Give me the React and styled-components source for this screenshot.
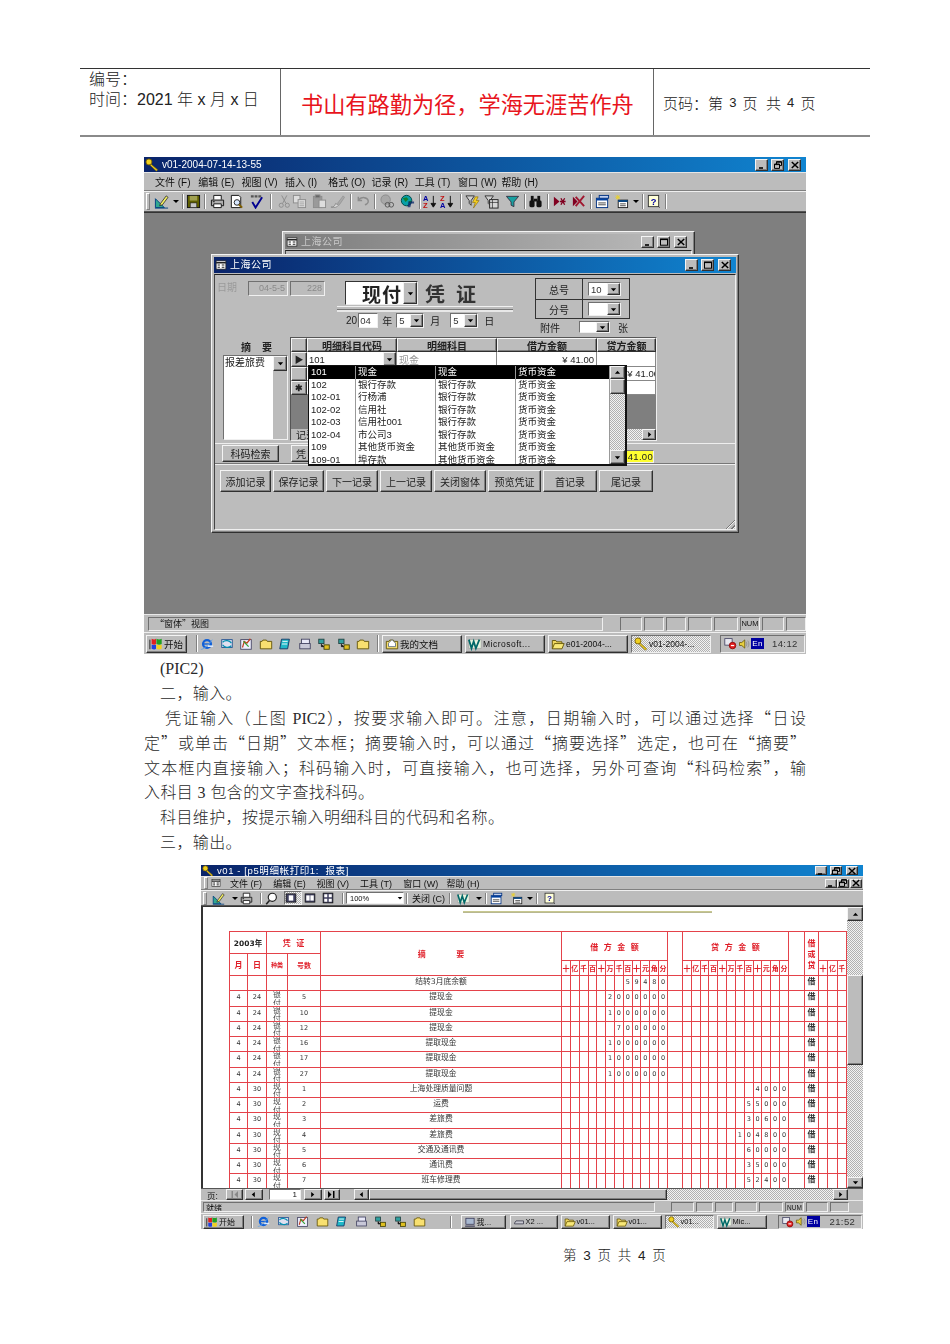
import React from 'react';
import styled, { createGlobalStyle, css } from 'styled-components';

const UI = `"Liberation Sans", "Noto Sans CJK SC", sans-serif`;
const SERIF = `"Liberation Serif", "Noto Sans CJK SC", serif`;
const FACE = '#bcbcbc';

const Global = createGlobalStyle`
  html, body { margin: 0; padding: 0; background: #fff; }
  body { font-family: ${SERIF}; color: #111; }
`;

const raised = css`
  background: ${FACE};
  border: 1px solid;
  border-color: #f4f4f4 #303030 #303030 #f4f4f4;
  box-shadow: inset -1px -1px 0 #808080;
  box-sizing: border-box;
`;
const sunken = css`
  border: 1px solid;
  border-color: #707070 #f0f0f0 #f0f0f0 #707070;
  box-sizing: border-box;
`;
const dither = css`
  background: repeating-conic-gradient(#f2f2f2 0 25%, #b0b0b0 0 50%) 0 0 / 2px 2px;
`;

/* ---------- document ---------- */
const Page = styled.div`
  width: 950px;
  height: 1344px;
  overflow: hidden;
  padding-top: 68px;
  box-sizing: border-box;
`;
const Header = styled.div`
  margin-left: 80px;
  width: 790px;
  height: 69px;
  box-sizing: border-box;
  border-top: 1px solid #333;
  border-bottom: 2px solid #8a8a8a;
  display: grid;
  grid-template-columns: 201px 373px 216px;
  font-family: ${UI};
  font-weight: 300;
`;
const HeadLeft = styled.div`
  padding: 1px 0 0 9px;
  font-size: 16px;
  line-height: 20px;
  color: #222;
  border-right: 1px solid #666;
`;
const HeadMid = styled.div`
  display: flex;
  align-items: center;
  padding: 2px 0 0 20px;
  font-size: 22.2px;
  font-weight: 400;
  color: #e8141c;
  border-right: 1px solid #666;
  white-space: nowrap;
`;
const HeadRight = styled.div`
  display: flex;
  align-items: center;
  padding: 1px 0 0 9px;
  font-size: 15px;
  color: #222;
  white-space: pre;
`;
const Narrow = styled.span`
  font-size: 13px;
  margin: 0 2px;
`;
const Shot = styled.div`
  margin-left: ${p => p.$x}px;
  margin-top: ${p => p.$top}px;
  width: 662px;
  height: ${p => p.$h}px;
  display: flex;
  flex-direction: column;
  background: ${FACE};
  font-family: ${UI};
  overflow: hidden;
  filter: blur(${p => p.$blur}px);
`;
const Body = styled.div`
  margin: 3px 0 0 144px;
  width: 662px;
  font-family: ${SERIF};
  font-size: 16px;
  font-weight: 300;
  line-height: 24.9px;
  color: #2a2a2a;
`;
const Line = styled.div`
  height: 24.9px;
  padding-left: ${p => p.$i || 0}px;
  letter-spacing: ${p => p.$s || 0}px;
  white-space: nowrap;
`;
const JLine = styled.div`
  height: 24.9px;
  padding-left: ${p => p.$i || 0}px;
  text-align: justify;
  text-align-last: justify;
`;
const Quote = styled.span`
  font-family: "Noto Sans CJK SC", sans-serif;
  line-height: 1;
`;
const PageNo = styled.div`
  margin: 19px 0 0 563px;
  font-family: ${UI};
  font-size: 13.5px;
  font-weight: 300;
  line-height: 16px;
  letter-spacing: 1.5px;
  color: #222;
  white-space: pre;
`;

/* ---------- window chrome ---------- */
const TitleBar = styled.div`
  flex: none;
  height: ${p => p.$h}px;
  line-height: ${p => p.$h}px;
  display: flex;
  align-items: center;
  gap: 3px;
  padding: 0 1px 0 1px;
  background: linear-gradient(90deg, ${p => (p.$off ? '#7c7c7c, #bdbdbd' : '#0a246a, #1084d0')});
  color: ${p => (p.$off ? '#c8c8c8' : '#fff')};
  font-size: ${p => p.$fs}px;
  letter-spacing: ${p => p.$ls || 0}px;
  white-space: pre;
  overflow: hidden;
`;
const Grow = styled.div`
  flex: 1;
  min-width: 0;
`;
const CtlBtn = styled.div`
  ${raised}
  flex: none;
  width: ${p => p.$w}px;
  height: ${p => p.$h}px;
  display: flex;
  align-items: center;
  justify-content: center;
  margin-left: ${p => p.$gap || 0}px;
`;
const MenuRow = styled.div`
  flex: none;
  height: ${p => p.$h}px;
  display: flex;
  align-items: center;
  padding-left: ${p => p.$pad}px;
  font-size: ${p => p.$fs}px;
  color: #111;
  white-space: nowrap;
  border-top: 1px solid #e6e6e6;
  border-bottom: 1px solid #808080;
  box-sizing: border-box;
`;
const MenuItem = styled.span`
  flex: none;
  width: 43.3px;
`;
const ToolRow = styled.div`
  flex: none;
  height: ${p => p.$h}px;
  display: flex;
  align-items: center;
  padding-left: 2px;
  box-sizing: border-box;
  border-top: 1px solid #efefef;
  border-bottom: 1px solid #555;
`;
const Grip = styled.div`
  flex: none;
  width: 2px;
  height: 80%;
  border: 1px solid;
  border-color: #fff #808080 #808080 #fff;
  margin-right: 3px;
`;
const Tool = styled.div`
  flex: none;
  width: ${p => p.$w}px;
  display: flex;
  align-items: center;
  justify-content: flex-start;
`;
const Sep = styled.div`
  flex: none;
  width: 0;
  height: 80%;
  border-left: 1px solid #808080;
  border-right: 1px solid #fff;
  margin: 0 ${p => p.$m ?? 2}px;
`;
const Pressed = styled(Tool)`
  ${sunken}
  ${dither}
  height: 14px;
`;
const DownSlot = styled(Tool)`
  justify-content: center;
`;
const DownMark = styled.span`
  width: 0;
  height: 0;
  border-left: 3px solid transparent;
  border-right: 3px solid transparent;
  border-top: 3px solid #000;
`;

/* ---------- status + taskbar ---------- */
const StatusRow = styled.div`
  flex: none;
  height: ${p => p.$h}px;
  display: flex;
  align-items: center;
  gap: ${p => p.$gap || 2}px;
  padding: 0 3px 0 ${p => p.$pad || 4}px;
  box-sizing: border-box;
  border-top: 1px solid #e8e8e8;
`;
const StatusCell = styled.div`
  ${sunken}
  flex: ${p => (p.$w ? 'none' : 1)};
  width: ${p => p.$w || 0}px;
  height: ${p => p.$ch}px;
  padding-left: ${p => p.$pl || 0}px;
  display: flex;
  align-items: center;
  justify-content: ${p => (p.$center ? 'center' : 'flex-start')};
  font-size: ${p => p.$fs || 9}px;
  white-space: nowrap;
  overflow: hidden;
`;
const TaskRow = styled.div`
  flex: none;
  height: ${p => p.$h}px;
  display: flex;
  align-items: center;
  padding: 0 1px 0 2px;
  box-sizing: border-box;
  border-top: 1px solid #efefef;
`;
const TaskBtn = styled.div`
  ${p => (p.$on ? sunken : raised)}
  ${p => p.$on && dither}
  flex: none;
  width: ${p => p.$w}px;
  height: ${p => p.$ch}px;
  margin-right: ${p => p.$gap ?? 3}px;
  display: flex;
  align-items: center;
  gap: 1px;
  padding-left: 2px;
  font-size: ${p => p.$fs || 9.5}px;
  letter-spacing: ${p => p.$ls || 0}px;
  white-space: nowrap;
  overflow: hidden;
`;
const Tray = styled.div`
  ${sunken}
  flex: none;
  margin-left: ${p => p.$ml}px;
  width: ${p => p.$w}px;
  height: ${p => p.$ch}px;
  display: flex;
  align-items: center;
  gap: 1px;
  padding-left: 3px;
  font-size: 9.5px;
  color: #333;
  letter-spacing: .4px;
`;
const EnBox = styled.span`
  flex: none;
  background: #0000a0;
  color: #fff;
  font-size: 8px;
  line-height: 11px;
  width: 13px;
  text-align: center;
  margin-right: ${p => p.$mr}px;
`;

/* ---------- desktop + windows ---------- */
const Desktop = styled.div`
  flex: 1;
  position: relative;
  background: #7f7f7f;
  border-top: 1px solid #333;
`;
const Win = styled.div`
  ${raised}
  position: absolute;
  left: ${p => p.$x}px;
  top: ${p => p.$y}px;
  width: ${p => p.$w}px;
  height: ${p => p.$h}px;
  padding: 2px;
  display: flex;
  flex-direction: column;
`;
const WinLabel = styled.span`
  font-size: 10px;
  letter-spacing: .5px;
`;
const Client = styled.div`
  flex: 1;
  margin-top: 1px;
  position: relative;
  border-top: 1px solid #222;
  border-left: 1px solid #444;
  border-right: 1px solid #efefef;
  border-bottom: 1px solid #efefef;
  background: ${FACE};
  display: flex;
  flex-direction: column;
  font-size: 10px;
  color: #222;
`;
const TopSection = styled.div`
  flex: none;
  height: 62px;
  display: flex;
`;
const DateGroup = styled.div`
  flex: none;
  display: flex;
  align-items: flex-start;
  padding: 6px 0 0 2px;
  width: 112px;
  box-sizing: border-box;
  color: #9a9a9a;
`;
const DateLabel = styled.span`
  width: 32px;
  line-height: 13px;
`;
const GrayField = styled.div`
  ${sunken}
  width: ${p => p.$w}px;
  height: 15px;
  margin-right: 2px;
  text-align: right;
  padding-right: 2px;
  line-height: 13px;
  font-size: 9px;
  color: #8a8a8a;
`;
const VoucherGroup = styled.div`
  flex: none;
  margin-left: 10px;
  width: 176px;
  display: flex;
  flex-direction: column;
`;
const VoucherTop = styled.div`
  display: flex;
  align-items: center;
  height: 24px;
  margin-top: 6px;
  padding-left: 8px;
`;
const PayBox = styled.div`
  ${sunken}
  width: 73px;
  height: 24px;
  background: #fff;
  display: flex;
  align-items: center;
  justify-content: flex-end;
  border-color: #333 #eee #eee #333;
`;
const PayText = styled.span`
  font-size: 19px;
  font-weight: 700;
  letter-spacing: 1px;
  color: #222;
  white-space: nowrap;
  margin-right: 1px;
`;
const VoucherText = styled.span`
  margin-left: 7px;
  font-size: 20px;
  font-weight: 700;
  white-space: pre;
  color: #333;
`;
const DoubleRule = styled.div`
  height: 2px;
  margin-top: 1px;
  border-top: 1px solid #f0f0f0;
  border-bottom: 1px solid #777;
  box-shadow: 0 2px 0 #e8e8e8;
`;
const DateRow = styled.div`
  display: flex;
  align-items: center;
  height: 15px;
  margin-top: 3px;
  padding-left: 9px;
  white-space: nowrap;
`;
const Word = styled.span`
  flex: none;
  margin-left: ${p => p.$ml || 0}px;
  margin-right: ${p => p.$mr || 0}px;
`;
const WhiteInput = styled.div`
  ${sunken}
  flex: none;
  width: ${p => p.$w}px;
  height: 15px;
  background: #fff;
  line-height: 13px;
  padding-left: 1px;
  font-size: 9.5px;
  color: #333;
`;
const SelectBox = styled.div`
  ${sunken}
  flex: none;
  width: ${p => p.$w}px;
  height: ${p => p.$h}px;
  margin: ${p => p.$m || '0'};
  background: #fff;
  display: flex;
  align-items: center;
  padding-left: 2px;
  font-size: 9.5px;
  color: #333;
  overflow: hidden;
`;
const SelectVal = styled.span`
  flex: 1;
`;
const Drop = styled.div`
  ${raised}
  flex: none;
  width: ${p => p.$w || 13}px;
  height: 100%;
  display: flex;
  align-items: center;
  justify-content: center;
`;
const NumBlock = styled.div`
  flex: none;
  margin-left: 22px;
  width: 95px;
`;
const NumTable = styled.div`
  margin-top: 3px;
  display: grid;
  grid-template-columns: 47px 47px;
  grid-template-rows: 21px 18px;
  border: 1px solid #333;
  box-sizing: border-box;
`;
const NumLabel = styled.div`
  display: flex;
  align-items: center;
  justify-content: center;
  border-right: 1px solid #333;
  border-bottom: ${p => (p.$last ? 0 : '1px solid #333')};
`;
const NumValue = styled.div`
  display: flex;
  align-items: center;
  padding-left: 5px;
  border-bottom: ${p => (p.$last ? 0 : '1px solid #333')};
`;
const AttachRow = styled.div`
  display: flex;
  align-items: center;
  height: 12px;
  margin-top: 2px;
  padding-left: 5px;
`;
const MidSection = styled.div`
  flex: none;
  height: 104px;
  display: flex;
  position: relative;
  z-index: 2;
`;
const SummaryCol = styled.div`
  flex: none;
  margin-left: 8px;
  width: 67px;
`;
const SummaryHead = styled.div`
  height: 18px;
  display: flex;
  align-items: center;
  justify-content: center;
  font-weight: 700;
  white-space: pre;
`;
const SummaryBox = styled.div`
  ${sunken}
  width: 65px;
  height: 85px;
  display: flex;
  background: ${FACE};
`;
const SummaryText = styled.div`
  flex: none;
  width: 49px;
  background: #fff;
  font-size: 10px;
  line-height: 13px;
  padding-left: 1px;
  box-sizing: border-box;
  white-space: nowrap;
`;
const SummaryDrop = styled.div`
  ${raised}
  flex: none;
  width: 14px;
  height: 15px;
  display: flex;
  align-items: center;
  justify-content: center;
`;
const Grid = styled.div`
  flex: none;
  width: 367px;
  height: 104px;
  position: relative;
  display: grid;
  grid-template-columns: 16px 90px 100px 100px 59px;
  grid-template-rows: 14px 15px 14px 14px 34px 11px;
  background: #fff;
  ${sunken}
  border-color: #555 #eee #eee #555;
`;
const HeadCell = styled.div`
  ${raised}
  display: flex;
  align-items: center;
  justify-content: center;
  font-size: 10px;
  font-weight: 700;
  white-space: nowrap;
  overflow: hidden;
`;
const RowMark = styled(HeadCell)`
  font-size: 9px;
`;
const DataCell = styled.div`
  display: flex;
  align-items: center;
  justify-content: ${p => (p.$right ? 'flex-end' : 'flex-start')};
  padding: 0 ${p => (p.$right ? 2 : 1)}px 0 ${p => (p.$right ? 0 : 2)}px;
  border-right: 1px solid #888;
  border-bottom: 1px solid #888;
  background: #fff;
  font-size: ${p => p.$fs || 9.5}px;
  color: ${p => p.$c || '#222'};
  white-space: nowrap;
  overflow: hidden;
`;
const Overrun = styled.span`
  flex: none;
  margin-right: -6px;
`;
const CellDrop = styled(Drop)`
  margin-left: auto;
  margin-right: -1px;
`;
const GridFill = styled.div`
  grid-column: 1 / -1;
  background: #7f7f7f;
`;
const RecordBar = styled.div`
  grid-column: 1 / -1;
  display: flex;
  align-items: center;
  background: ${FACE};
  padding-left: 5px;
  font-size: 10px;
`;
const BarArrow = styled.div`
  ${raised}
  flex: none;
  width: ${p => p.$w || 14}px;
  height: ${p => p.$h || 11}px;
  display: flex;
  align-items: center;
  justify-content: center;
`;
const DitherFill = styled.div`
  ${dither}
  flex: ${p => (p.$h ? 'none' : 1)};
  height: ${p => (p.$h ? `${p.$h}px` : 'auto')};
  align-self: stretch;
`;
const List = styled.div`
  position: absolute;
  left: 17px;
  top: 27px;
  width: 319px;
  height: 101px;
  z-index: 3;
  display: flex;
  background: #fff;
  border: 1px solid #111;
  border-width: 1px 2px 2px 1px;
  box-sizing: border-box;
`;
const ListRows = styled.div`
  flex: 1;
  min-width: 0;
  overflow: hidden;
`;
const ListRow = styled.div`
  display: grid;
  grid-template-columns: 47px 80px 80px 1fr;
  height: 12.5px;
  line-height: 12.5px;
  font-size: 9.5px;
  background: ${p => (p.$sel ? '#000' : '#fff')};
  color: ${p => (p.$sel ? '#fff' : '#222')};
`;
const ListCell = styled.div`
  padding-left: 2px;
  border-right: 1px solid #999;
  white-space: nowrap;
  overflow: hidden;
`;
const VScroll = styled.div`
  flex: none;
  width: ${p => p.$w}px;
  display: flex;
  flex-direction: column;
`;
const Thumb = styled.div`
  ${raised}
  flex: none;
  height: ${p => p.$h}px;
`;
const FootRow = styled.div`
  flex: none;
  height: 21px;
  display: flex;
  align-items: center;
  box-sizing: border-box;
  margin-top: 2px;
  border-top: 1px solid #eee;
  border-bottom: 1px solid #777;
  box-shadow: 0 1px 0 #eee;
`;
const SmallBtn = styled.div`
  ${raised}
  flex: none;
  width: ${p => p.$w}px;
  height: ${p => p.$h}px;
  margin: ${p => p.$m || '0'};
  display: flex;
  align-items: center;
  justify-content: ${p => p.$left ? 'flex-start' : 'center'};
  padding-left: ${p => p.$left ? 4 : 0}px;
  font-size: 10px;
  white-space: nowrap;
`;
const YellowField = styled.div`
  ${sunken}
  flex: none;
  margin-left: auto;
  margin-right: 81px;
  margin-top: 6px;
  width: 28px;
  height: 13px;
  background: #ffff30;
  font-size: 9.5px;
  line-height: 11px;
  text-align: right;
  letter-spacing: .3px;
  color: #222;
`;
const ButtonRow = styled.div`
  flex: none;
  display: flex;
  gap: 2px;
  padding: 6px 0 0 5px;
`;
const ResizeGrip = styled.div`
  position: absolute;
  right: 0;
  bottom: 0;
  width: 12px;
  height: 12px;
  background: repeating-linear-gradient(135deg, transparent 0 2px, #777 2px 3px, #eee 3px 4px);
  clip-path: polygon(100% 0, 100% 100%, 0 100%);
`;

/* ---------- second shot ---------- */
const Content = styled.div`
  flex: 1;
  min-height: 0;
  display: flex;
  background: #fff;
  border-left: 2px solid #333;
  border-top: 1px solid #333;
`;
const Sheet = styled.div`
  flex: 1;
  min-width: 0;
  overflow: hidden;
  padding: 0 0 0 26px;
`;
const Ribbon = styled.div`
  margin: 4px 0 18px 234px;
  width: 249px;
  height: 2px;
  border-top: 1px solid #c8c890;
  border-bottom: 1px solid #b8b890;
  box-sizing: border-box;
`;
const Ledger = styled.table`
  border-collapse: collapse;
  table-layout: fixed;
  width: 617px;
  font-family: "DejaVu Sans", "Noto Sans CJK SC", sans-serif;
  color: #333;
  td { border: 1px solid #e4424a; padding: 0; text-align: center; font-size: 6.5px; overflow: hidden; white-space: nowrap; }
`;
const HeadTd = styled.td`
  && { color: #e01e28; font-size: ${p => p.$fs || 7.5}px; font-weight: 600; white-space: pre-wrap; }
`;
const Row = styled.tr`
  height: ${p => p.$h}px;
`;
const DocCell = styled.td`
  && { vertical-align: top; line-height: 12px; }
`;
const MemoCell = styled(DocCell)`
  && { font-size: 7.8px; line-height: 11px; }
`;
const Kind = styled.div`
  width: 9px;
  height: 14px;
  margin: 0 auto;
  overflow: hidden;
  white-space: normal;
  line-height: 8.5px;
  font-size: 7.8px;
  color: #444;
`;
const Side = styled.td`
  && { font-size: 8px; vertical-align: top; line-height: 12px; font-weight: 600; }
`;
const PagerRow = styled.div`
  flex: none;
  height: 12px;
  display: flex;
  align-items: center;
  padding-left: 6px;
  font-size: 8.5px;
  border-top: 1px solid #555;
  box-sizing: border-box;
`;
const PageBox = styled.div`
  ${sunken}
  flex: none;
  margin: 0 3px 0 6px;
  width: 32px;
  height: 11px;
  background: #fff;
  text-align: right;
  padding-right: 3px;
  font-size: 8px;
  line-height: 9px;
`;
const HThumb = styled.div`
  ${raised}
  flex: none;
  width: 298px;
  height: 11px;
`;
const Combo = styled.div`
  ${sunken}
  flex: none;
  width: 58px;
  height: 12px;
  background: #fff;
  display: flex;
  align-items: center;
  padding-left: 3px;
  font-size: 7.5px;
  font-family: ${UI};
`;
const ToolText = styled.span`
  flex: none;
  width: ${p => p.$w}px;
  text-align: center;
  font-size: 9px;
  white-space: nowrap;
`;
const TailGap = styled.div`
  flex: none;
  width: ${p => p.$w}px;
`;
const DarkInk = styled.span`
  color: #222;
`;

/* ---------- icons ---------- */
const G = '#8c8c8c';
const paths = {
  key: <g><circle cx="4.5" cy="4.5" r="3.4" fill="#f0d020" stroke="#7a6000"/><path d="M7 7l7.5 6.5-1.5 1.5L6 8.5z" fill="#e8c820" stroke="#7a6000" strokeWidth=".7"/></g>,
  design: <g><path d="M1.5 14.5V5l9.5 9.5z" fill="#30a890" stroke="#004080"/><path d="M1 15h14" stroke="#004080"/><path d="M7 10l6-8 2 1.5-6 8-3 1z" fill="#f4f060" stroke="#222" strokeWidth=".8"/></g>,
  save: <g><rect x="1.5" y="1.5" width="13" height="13" fill="#606000" stroke="#111"/><rect x="4" y="2" width="8" height="5" fill="#a0a050"/><rect x="4.5" y="9.5" width="7" height="5" fill="#c8c8c8" stroke="#111" strokeWidth=".6"/></g>,
  print: <g><path d="M4 6V1.5h8V6" fill="#fff" stroke="#111"/><path d="M1.5 6.5h13v6h-13z" fill="#b0b0b0" stroke="#111"/><path d="M4 10.5h8v4H4z" fill="#fff" stroke="#111"/><path d="M3 8.2h2" stroke="#111"/></g>,
  preview: <g><path d="M2.5 1.5h8l2 2v11h-10z" fill="#fff" stroke="#111"/><circle cx="8.5" cy="9" r="3" fill="#d8e8ff" stroke="#222"/><path d="M10.6 11.2l3.4 3.4" stroke="#806000" strokeWidth="2"/></g>,
  spell: <g><path d="M2 2.5h11" stroke="#555" strokeWidth="2.4" strokeDasharray="3 1"/><path d="M3.5 8.5l3.5 6 7-11" stroke="#000090" strokeWidth="2" fill="none"/></g>,
  cut: <g fill="none" stroke={G}><circle cx="4.5" cy="12" r="2.2"/><circle cx="11" cy="12" r="2.2"/><path d="M6 10L10.5 1.5M9.5 10L5 1.5"/></g>,
  copy: <g stroke={G}><rect x="1.5" y="1.5" width="7" height="8" fill="#ddd"/><rect x="6.5" y="6" width="8" height="8.5" fill="#ddd"/><path d="M8 8.5h5M8 10.5h5M8 12.5h5" strokeWidth=".7"/></g>,
  paste: <g stroke={G}><rect x="1.5" y="2.5" width="9" height="12" fill="#9a9a9a"/><rect x="3.5" y="1" width="5" height="3" fill="#666"/><rect x="7.5" y="6.5" width="7" height="8" fill="#ddd"/></g>,
  brush: <g><path d="M1 14c3 0 4-1 5-4l3 2c-1 2-4 3-8 2z" fill="#dcdcdc" stroke={G}/><path d="M8 10l6-8 1.5 1.5L10 11.5z" fill="#aaa" stroke={G} strokeWidth=".7"/></g>,
  undo: <g fill="none" stroke={G} strokeWidth="1.6"><path d="M3 6c3-3 9-3 10 1 .4 2-1.5 4-3.5 4.5"/><path d="M2.5 3v4h4"/></g>,
  link: <g><circle cx="6" cy="6" r="5" fill="#a8a8a8" stroke={G}/><circle cx="8" cy="11.5" r="2.5" fill="none" stroke="#555"/><circle cx="12" cy="11.5" r="2.5" fill="none" stroke="#555"/></g>,
  globe: <g><circle cx="7" cy="7" r="5.6" fill="#08a0a8" stroke="#044"/><path d="M3 4.5l4-1 2 2-3 3zM9 8l3-1-1 4z" fill="#148030"/><path d="M9 8h6v2H12l-1 4H8z" fill="#0a246a" opacity=".75"/></g>,
  az: <g fontFamily="Liberation Sans" fontWeight="700" fontSize="8"><text x="0" y="7" fill="#0000a0">A</text><text x="0" y="15" fill="#c01010">Z</text><path d="M11 2v10M8.5 10l2.5 4 2.5-4z" stroke="#111" fill="#111"/></g>,
  za: <g fontFamily="Liberation Sans" fontWeight="700" fontSize="8"><text x="0" y="7" fill="#c01010">Z</text><text x="0" y="15" fill="#0000a0">A</text><path d="M11 2v10M8.5 10l2.5 4 2.5-4z" stroke="#111" fill="#111"/></g>,
  filterSel: <g><path d="M1 2h9L6.5 7v5L4.5 10V7z" fill="#d0d0d0" stroke="#333"/><path d="M11 3l-3 6h3l-2 6 6-8h-3l2-4z" fill="#f4d020" stroke="#806000" strokeWidth=".6"/></g>,
  filterForm: <g><path d="M1 2h9L6.5 7v5L4.5 10V7z" fill="#d0d0d0" stroke="#333"/><rect x="6" y="6" width="9" height="9" fill="#d8d8d8" stroke="#222"/><path d="M6 9h9M9 6v9" stroke="#222" strokeWidth=".7"/></g>,
  filter: <path d="M1.5 2.5h13l-5 6v5l-3-1.5V8.5z" fill="#18a0a0" stroke="#334"/>,
  find: <g fill="#111"><rect x="1.5" y="7" width="5.5" height="7" rx="1.5"/><rect x="9" y="7" width="5.5" height="7" rx="1.5"/><rect x="3" y="2" width="3" height="6"/><rect x="10" y="2" width="3" height="6"/><rect x="6" y="5" width="4" height="3"/></g>,
  newRec: <g><path d="M2 3v10l6-5z" fill="#800020"/><path d="M9.5 4.5l4 7M13.5 4.5l-4 7M8.5 8h6" stroke="#800020" strokeWidth="1.4"/></g>,
  delRec: <g><path d="M2 3v10l5-5z" fill="#800020"/><path d="M5 3l9 10M14 2L5 13" stroke="#a01830" strokeWidth="2"/></g>,
  dbWin: <g><rect x="1.5" y="4.5" width="12" height="10" fill="#fff" stroke="#003080"/><rect x="1.5" y="4.5" width="12" height="2.4" fill="#0040a0"/><rect x="4.5" y="1.5" width="10" height="3" fill="#c0d0f0" stroke="#003080"/><path d="M3.5 9.5h8M3.5 11.5h8" stroke="#444"/></g>,
  newObj: <g><rect x="4.5" y="6.5" width="10" height="8" fill="#fff" stroke="#222"/><rect x="4.5" y="6.5" width="10" height="2" fill="#004080"/><path d="M6.5 10.5h6M6.5 12.5h6" stroke="#444"/><path d="M4 1v5M1.5 3.5h5M2 1.5l4 4M6 1.5l-4 4" stroke="#e8d030"/></g>,
  help: <g><rect x="2.5" y="1.5" width="11" height="12" fill="#ffffd8" stroke="#333"/><path d="M13.5 13.5l1 1" stroke="#333"/><text x="8" y="11.5" textAnchor="middle" fontFamily="Liberation Sans" fontWeight="700" fontSize="10" fill="#0000a0">?</text></g>,
  form: <g><rect x="1.5" y="2.5" width="13" height="11" fill="#fff" stroke="#222"/><path d="M1.5 5h13" stroke="#222" strokeWidth="2"/><path d="M3.5 8h3M3.5 11h3M9 8h3.5M9 11h3.5" stroke="#222" strokeWidth="1.6"/></g>,
  lens: <g><circle cx="9" cy="6.5" r="5" fill="#fff" stroke="#222" strokeWidth="1.4"/><path d="M5.5 10.5L1.5 15" stroke="#222" strokeWidth="2"/></g>,
  page1: <g><rect x="1.5" y="2.5" width="13" height="11" fill="#404060" stroke="#111"/><rect x="5" y="4.5" width="6" height="7" fill="#fff"/></g>,
  page2: <g><rect x="1.5" y="2.5" width="13" height="11" fill="#404060" stroke="#111"/><rect x="3" y="4.5" width="4.5" height="7" fill="#fff"/><rect x="8.5" y="4.5" width="4.5" height="7" fill="#fff"/></g>,
  page4: <g><rect x="1.5" y="1.5" width="13" height="13" fill="#404060" stroke="#111"/><path d="M3 3h4v4H3zM9 3h4v4H9zM3 9h4v4H3zM9 9h4v4H9z" fill="#fff"/></g>,
  word: <g><path d="M1 3h14v10H1z" fill="#e8f4e0" stroke="#888" strokeWidth=".5"/><path d="M1 3l3 10 2.5-8L9 13l4-10" stroke="#006868" strokeWidth="2" fill="none"/></g>,
  flag: <g><path d="M1 3v11" stroke="#111"/><path d="M3 2c2 1 4 1 5 0v6c-1 1-3 1-5 0z" fill="#e02020"/><path d="M8.5 2c2 1 4 1 6 0v6c-2 1-4 1-6 0z" fill="#20a020"/><path d="M3 8.5c2 1 4 1 5 0v5c-1 1-3 1-5 0z" fill="#2040e0"/><path d="M8.5 8.5c2 1 4 1 6 0v5c-2 1-4 1-6 0z" fill="#f0d020"/></g>,
  ie: <g><circle cx="8" cy="8" r="4.5" fill="none" stroke="#1060d8" strokeWidth="2.6"/><path d="M4 8h8" stroke="#1060d8" strokeWidth="1.6"/><path d="M9 10.5h6" stroke="#d8e8ff" strokeWidth="1.8"/><path d="M1 14c2 1 9-5 13-11" stroke="#60a0e8" fill="none"/></g>,
  ql1: <g><rect x="2" y="3" width="12" height="9" fill="#e0e0f0" stroke="#205090"/><path d="M3 6c3-3 8-2 10 1M13 10c-3 3-8 2-10-1" stroke="#0090b0" strokeWidth="1.4" fill="none"/></g>,
  ql2: <g><rect x="2" y="3" width="12" height="11" fill="#f0f0ff" stroke="#404060"/><path d="M4 12l2-7 3 2 4-5" stroke="#c04020" strokeWidth="1.4" fill="none"/><path d="M5 5l6 6" stroke="#30a030" strokeWidth="1.4"/></g>,
  folder: <g><path d="M1.5 13.5V5h2l1-1.5h4L9.5 5h5v8.5z" fill="#f8e070" stroke="#605000"/></g>,
  ql4: <g><path d="M4 2.5h9L11 13.5H2z" fill="#20b8c8" stroke="#103060"/><path d="M5 5h6M4.5 8h6" stroke="#fff"/></g>,
  ql5: <g><rect x="4" y="2.5" width="9" height="6" fill="#e8e8f8" stroke="#404060"/><rect x="2" y="7.5" width="12" height="6" fill="#c8c8d8" stroke="#404060"/></g>,
  ql6: <g><rect x="2" y="2.5" width="6" height="5" fill="#30a0a0" stroke="#204040"/><rect x="8" y="9" width="6" height="5" fill="#e0c020" stroke="#404000"/><path d="M5 8v3h3" stroke="#202020"/></g>,
  home: <g><path d="M1.5 13.5V5h3l1-1.5h4L10.5 5h4v8.5z" fill="#f8e070" stroke="#605000"/><path d="M4 7l4-4 4 4v4H4z" fill="#fff" stroke="#607080"/></g>,
  openf: <g><path d="M1.5 13.5V4h4l1 1.5h6v2" fill="#f0d860" stroke="#605000"/><path d="M1.5 13.5l2.5-6h11l-2.5 6z" fill="#f8e878" stroke="#605000"/></g>,
  pc: <g><rect x="2.5" y="3" width="11" height="8" fill="#a8b8d0" stroke="#303050"/><path d="M1.5 13.5h13" stroke="#303050" strokeWidth="1.4"/></g>,
  drive: <g><path d="M2 9.5l2-3h10v4H2z" fill="#c8c8d0" stroke="#303040"/></g>,
  tray: <g><rect x="1" y="2" width="9" height="8" fill="#e8e8f0" stroke="#404060"/><circle cx="10.5" cy="10.5" r="4" fill="#e02020" stroke="#800"/><path d="M8.5 10.5h4" stroke="#fff" strokeWidth="1.5"/></g>,
  speaker: <g><path d="M2 6h3l4-3.5v11L5 10H2z" fill="#e8d040" stroke="#605000"/><path d="M11 5c1 2 1 4 0 6M13 3.5c2 3 2 6 0 9" stroke="#888" fill="none"/></g>,
};
const Svg = styled.svg`
  flex: none;
  display: block;
`;
const Ic = ({ n, s = 15 }) => <Svg width={s} height={s} viewBox="0 0 16 16">{paths[n]}</Svg>;

const Min = () => <Svg width="8" height="8" viewBox="0 0 8 8"><path d="M1 7h4" stroke="#000" strokeWidth="1.6" /></Svg>;
const Max = () => <Svg width="8" height="8" viewBox="0 0 8 8"><rect x=".5" y="1" width="7" height="6.2" fill="none" stroke="#000" /><path d="M.5 1.5h7" stroke="#000" strokeWidth="1.2" /></Svg>;
const Rest = () => <Svg width="8" height="8" viewBox="0 0 8 8"><path d="M2.5 3V.6h5v4H5.5M.5 3h5v4.4h-5zM.5 3.6h5M2.5 1.2h5" fill="none" stroke="#000" /></Svg>;
const Cls = () => <Svg width="8" height="8" viewBox="0 0 8 8"><path d="M.8 1l6.4 6M7.2 1L.8 7" stroke="#000" strokeWidth="1.5" /></Svg>;
const Tri = ({ d = 'down', s = 7 }) => {
  const p = { down: 'M1 2.5h6L4 6z', up: 'M1 5.5h6L4 2z', left: 'M5.5 1v6L2 4z', right: 'M2.5 1v6L6 4z' }[d];
  return <Svg width={s} height={s} viewBox="0 0 8 8"><path d={p} fill="#000" /></Svg>;
};
const FirstLast = ({ end, c = '#000' }) => (
  <Svg width="9" height="7" viewBox="0 0 9 7">
    {end ? <path d="M1 0v7l3.5-3.5zM6 0h1.5v7H6z" fill={c} /> : <path d="M8 0v7L4.5 3.5zM1.5 0H3v7H1.5z" fill={c} />}
  </Svg>
);

const Controls = ({ w, h, gap, restore, tail = 1 }) => (
  <>
    <CtlBtn $w={w} $h={h}><Min /></CtlBtn>
    <CtlBtn $w={w} $h={h}>{restore ? <Rest /> : <Max />}</CtlBtn>
    <CtlBtn $w={w} $h={h} $gap={gap}><Cls /></CtlBtn>
    <TailGap $w={tail} />
  </>
);

const Tools = ({ items, s }) => items.map((t, i) => {
  if (t === '|') return <Sep key={i} />;
  if (typeof t === 'number') return <TailGap key={i} $w={t} />;
  if (t === 'v') return <DownSlot key={i} $w={8}><DownMark /></DownSlot>;
  if (t === 'V') return <DownSlot key={i} $w={10}><DownMark /></DownSlot>;
  return <Tool key={i} $w={t[1]}><Ic n={t[0]} s={s} /></Tool>;
});

/* Latin curly quotes would come out narrow: give them the CJK face */
const Q = ({ children }) => children.split(/([“”])/).map((p, i) => (
  p === '“' || p === '”' ? <Quote key={i}>{p}</Quote> : p
));

/* ---------- data ---------- */
const MENU1 = ['文件 (F)', '编辑 (E)', '视图 (V)', '插入 (I)', '格式 (O)', '记录 (R)', '工具 (T)', '窗口 (W)', '帮助 (H)'];
const MENU2 = ['文件 (F)', '编辑 (E)', '视图 (V)', '工具 (T)', '窗口 (W)', '帮助 (H)'];
const TOOLS1 = [
  1, ['design', 18], 'v', '|', ['save', 16], '|', 2, ['print', 19], ['preview', 20], ['spell', 19], '|', 3,
  ['cut', 15], ['copy', 20], ['paste', 18], ['brush', 18], '|', 2, ['undo', 16], '|', 2, ['link', 20], ['globe', 17], '|',
  ['az', 17], ['za', 18], '|', 1, ['filterSel', 19], ['filterForm', 21], ['filter', 17], '|', ['find', 17], '|', 1,
  ['newRec', 19], ['delRec', 17], '|', 1, ['dbWin', 19], ['newObj', 18], 'v', '|', ['help', 17], '|',
];
const PICK = [
  ['101', '现金', '现金', '货币资金'],
  ['102', '银行存款', '银行存款', '货币资金'],
  ['102-01', '行杨浦', '银行存款', '货币资金'],
  ['102-02', '信用社', '银行存款', '货币资金'],
  ['102-03', '信用社001', '银行存款', '货币资金'],
  ['102-04', '市公司3', '银行存款', '货币资金'],
  ['109', '其他货币资金', '其他货币资金', '货币资金'],
  ['109-01', '埠存款', '其他货币资金', '货币资金'],
];
const ACTIONS = [['添加记录', 51], ['保存记录', 51], ['下一记录', 52], ['上一记录', 52], ['关闭窗体', 52], ['预览凭证', 53], ['首记录', 54], ['尾记录', 54]];
const QUICK = ['ie', 'ql1', 'ql2', 'folder', 'ql4', 'ql5', 'ql6', 'ql6', 'folder'];
const UNITS = ['十', '亿', '千', '百', '十', '万', '千', '百', '十', '元', '角', '分'];
const LEDGER = [
  ['', '', '', '', '结转3月底余额', '59480', ''],
  ['4', '24', '银付', '5', '提现金', '2000000', ''],
  ['4', '24', '银付', '10', '提现金', '1000000', ''],
  ['4', '24', '银付', '12', '提现金', '700000', ''],
  ['4', '24', '银付', '16', '提取现金', '1000000', ''],
  ['4', '24', '银付', '17', '提取现金', '1000000', ''],
  ['4', '24', '银付', '27', '提取现金', '1000000', ''],
  ['4', '30', '现付', '1', '上海处理质量问题', '', '4000'],
  ['4', '30', '现付', '2', '运费', '', '55000'],
  ['4', '30', '现付', '3', '差旅费', '', '30600'],
  ['4', '30', '现付', '4', '差旅费', '', '104800'],
  ['4', '30', '现付', '5', '交通及通讯费', '', '60000'],
  ['4', '30', '现付', '6', '通讯费', '', '35000'],
  ['4', '30', '现付', '7', '班车修理费', '', '52400'],
];
const COLW = [18, 19, 21, 33, 241, ...Array(12).fill(8.83), 15, ...Array(12).fill(8.83), 16, 14, 9.3, 9.3, 9.4];
const digits = s => Array.from(s.padStart(12, ' '));

const Select = ({ w, h, m, v, dw }) => (
  <SelectBox $w={w} $h={h} $m={m}>
    <SelectVal>{v}</SelectVal>
    <Drop $w={dw}><Tri /></Drop>
  </SelectBox>
);

const VoucherWindow = () => (
  <Win $x={67} $y={41} $w={528} $h={279}>
    <TitleBar $h={16} $fs={10}>
      <Ic n="form" s={12} /><WinLabel>上海公司</WinLabel>
      <Grow />
      <Controls w={13} h={12} gap={1} />
    </TitleBar>
    <Client>
      <TopSection>
        <DateGroup>
          <DateLabel>日期</DateLabel>
          <GrayField $w={41}>04-5-5</GrayField>
          <GrayField $w={36}>228</GrayField>
        </DateGroup>
        <VoucherGroup>
          <VoucherTop>
            <PayBox>
              <PayText>现付</PayText>
              <Drop $w={14}><Tri /></Drop>
            </PayBox>
            <VoucherText>凭  证</VoucherText>
          </VoucherTop>
          <DoubleRule />
          <DateRow>
            <Word $mr={1}>20</Word>
            <WhiteInput $w={20}>04</WhiteInput>
            <Word $ml={4}>年</Word>
            <Select w={28} h={15} m="0 0 0 4px" v="5" />
            <Word $ml={6}>月</Word>
            <Select w={28} h={15} m="0 0 0 10px" v="5" />
            <Word $ml={6}>日</Word>
          </DateRow>
        </VoucherGroup>
        <NumBlock>
          <NumTable>
            <NumLabel>总号</NumLabel>
            <NumValue><Select w={33} h={14} v="10" /></NumValue>
            <NumLabel $last>分号</NumLabel>
            <NumValue $last><Select w={33} h={14} /></NumValue>
          </NumTable>
          <AttachRow>
            附件
            <Select w={31} h={12} m="0 8px 0 19px" />
            张
          </AttachRow>
        </NumBlock>
      </TopSection>
      <MidSection>
        <SummaryCol>
          <SummaryHead>摘    要</SummaryHead>
          <SummaryBox>
            <SummaryText>报差旅费</SummaryText>
            <SummaryDrop><Tri /></SummaryDrop>
          </SummaryBox>
        </SummaryCol>
        <Grid>
          <RowMark />
          <HeadCell>明细科目代码</HeadCell>
          <HeadCell>明细科目</HeadCell>
          <HeadCell>借方金额</HeadCell>
          <HeadCell>贷方金额</HeadCell>

          <RowMark>▶</RowMark>
          <DataCell>101<CellDrop $w={13}><Tri /></CellDrop></DataCell>
          <DataCell $c="#999" $fs={10}>现金</DataCell>
          <DataCell $right>¥ 41.00</DataCell>
          <DataCell />

          <RowMark />
          <DataCell /><DataCell /><DataCell />
          <DataCell $right><Overrun>¥ 41.00</Overrun></DataCell>

          <RowMark>✱</RowMark>
          <DataCell /><DataCell /><DataCell /><DataCell />

          <GridFill />
          <RecordBar>
            记录
            <Grow />
            <DitherFill />
            <BarArrow><Tri d="right" /></BarArrow>
          </RecordBar>
          <List>
            <ListRows>
              {PICK.map((r, i) => (
                <ListRow key={r[0]} $sel={i === 0}>
                  {r.map((c, j) => <ListCell key={j}>{c}</ListCell>)}
                </ListRow>
              ))}
            </ListRows>
            <VScroll $w={15}>
              <BarArrow $w={15} $h={13}><Tri d="up" /></BarArrow>
              <Thumb $h={15} />
              <DitherFill />
              <BarArrow $w={15} $h={14}><Tri /></BarArrow>
            </VScroll>
          </List>
        </Grid>
      </MidSection>
      <FootRow>
        <SmallBtn $w={57} $h={17} $m="0 0 0 7px">科码检索</SmallBtn>
        <SmallBtn $w={50} $h={17} $m="0 0 0 12px" $left>凭</SmallBtn>
        <YellowField>41.00</YellowField>
      </FootRow>
      <ButtonRow>
        {ACTIONS.map(([t, w]) => <SmallBtn key={t} $w={w} $h={22}>{t}</SmallBtn>)}
      </ButtonRow>
      <ResizeGrip />
    </Client>
  </Win>
);

const ShotOne = () => (
  <Shot $x={144} $top={20} $h={497} $blur={0.35}>
    <TitleBar $h={15} $fs={10}>
      <Ic n="key" s={14} />v01-2004-07-14-13-55
      <Grow />
      <Controls w={13} h={12} gap={1} restore />
    </TitleBar>
    <MenuRow $h={19} $pad={11} $fs={10}>
      {MENU1.map(m => <MenuItem key={m}>{m}</MenuItem>)}
    </MenuRow>
    <ToolRow $h={21}>
      <Grip />
      <Tools items={TOOLS1} />
    </ToolRow>
    <Desktop>
      <Win $x={138} $y={18} $w={413} $h={34}>
        <TitleBar $h={15} $fs={10} $off>
          <Ic n="form" s={12} /><WinLabel>上海公司</WinLabel>
          <Grow />
          <Controls w={13} h={12} gap={1} />
        </TitleBar>
        <Client />
      </Win>
      <VoucherWindow />
    </Desktop>
    <StatusRow $h={18} $gap={2}>
      <StatusCell $w={455} $ch={14} $pl={6}><span><Q>“窗体”视图</Q></span></StatusCell>
      <TailGap $w={13} />
      <StatusCell $w={22} $ch={14} />
      <StatusCell $w={20} $ch={14} />
      <StatusCell $w={20} $ch={14} />
      <StatusCell $w={24} $ch={14} />
      <StatusCell $w={24} $ch={14} />
      <StatusCell $w={20} $ch={14} $center $fs={7.5}>NUM</StatusCell>
      <StatusCell $w={22} $ch={14} />
      <StatusCell $w={20} $ch={14} />
    </StatusRow>
    <TaskRow $h={22}>
      <TaskBtn $w={41} $ch={18} $gap={8}><Ic n="flag" s={14} />开始</TaskBtn>
      <Sep $m={1} />
      <TailGap $w={1} />
      {QUICK.map((q, i) => <Tool key={i} $w={19.5}><Ic n={q} s={14} /></Tool>)}
      <Sep $m={1} />
      <TailGap $w={2.5} />
      <TaskBtn $w={80} $ch={18}><Ic n="home" s={14} />我的文档</TaskBtn>
      <TaskBtn $w={80} $ch={18} $fs={8.5} $ls={.5}><Ic n="word" s={14} />Microsoft...</TaskBtn>
      <TaskBtn $w={80} $ch={18} $fs={8.5}><Ic n="openf" s={14} />e01-2004-...</TaskBtn>
      <TaskBtn $w={80} $ch={18} $fs={8.5} $on><Ic n="key" s={14} />v01-2004-...</TaskBtn>
      <Tray $ml={6} $w={85} $ch={18}>
        <Ic n="tray" s={13} /><Ic n="speaker" s={12} /><EnBox $mr={7}>En</EnBox>14:12
      </Tray>
    </TaskRow>
  </Shot>
);

const ShotTwo = () => (
  <Shot $x={201} $top={9} $h={364} $blur={0.45}>
    <TitleBar $h={11} $fs={9.5} $ls={.6}>
      <Ic n="key" s={12} />v01 - [p5明细帐打印1:  报表]
      <Grow />
      <Controls w={12} h={9} gap={1} restore />
    </TitleBar>
    <MenuRow $h={14} $pad={3} $fs={9}>
      <Grip />
      <Tool $w={19}><Ic n="form" s={10} /></Tool>
      {MENU2.map(m => <MenuItem key={m}>{m}</MenuItem>)}
      <Grow />
      <Controls w={12} h={9} gap={1} restore />
    </MenuRow>
    <ToolRow $h={16}>
      <Grip />
      <Tools s={13} items={[2, ['design', 18], 'V', ['print', 18], '|', 1, ['lens', 19]]} />
      <Pressed $w={18}><Ic n="page1" s={12} /></Pressed>
      <Tools s={12} items={[2, ['page2', 18], ['page4', 18], '|']} />
      <Combo>100%<Grow /><Tri s={6} /></Combo>
      <Sep />
      <ToolText $w={37}>关闭 (C)</ToolText>
      <Sep />
      <Tools s={13} items={[4, ['word', 18], 'v', '|', 1, ['dbWin', 20], ['newObj', 16], 'v', '|', 3, ['help', 18]]} />
    </ToolRow>
    <Content>
      <Sheet>
        <Ribbon />
        <Ledger>
          <colgroup>{COLW.map((w, i) => <col key={i} width={w} />)}</colgroup>
          <tbody>
            <Row $h={22}>
              <HeadTd colSpan={2} $fs={7.5}><DarkInk>2003年</DarkInk></HeadTd>
              <HeadTd colSpan={2} $fs={8}>凭  证</HeadTd>
              <HeadTd rowSpan={3} $fs={8}>摘           要</HeadTd>
              <HeadTd colSpan={12} rowSpan={2} $fs={8}>借  方  金  额</HeadTd>
              <td rowSpan={3} />
              <HeadTd colSpan={12} rowSpan={2} $fs={8}>贷  方  金  额</HeadTd>
              <td rowSpan={3} />
              <HeadTd rowSpan={3} $fs={8}>借<br />或<br />贷</HeadTd>
              <td colSpan={3} rowSpan={2} />
            </Row>
            <Row $h={7}>
              <HeadTd rowSpan={2} $fs={8}>月</HeadTd>
              <HeadTd rowSpan={2} $fs={8}>日</HeadTd>
              <HeadTd rowSpan={2} $fs={6}>种类</HeadTd>
              <HeadTd rowSpan={2} $fs={7}>号数</HeadTd>
            </Row>
            <Row $h={15}>
              {UNITS.map((u, i) => <HeadTd key={`d${i}`} $fs={7}>{u}</HeadTd>)}
              {UNITS.map((u, i) => <HeadTd key={`c${i}`} $fs={7}>{u}</HeadTd>)}
              {UNITS.slice(0, 3).map((u, i) => <HeadTd key={`e${i}`} $fs={7}>{u}</HeadTd>)}
            </Row>
            {LEDGER.map((r, i) => (
              <Row key={i} $h={15.25}>
                <DocCell>{r[0]}</DocCell>
                <DocCell>{r[1]}</DocCell>
                <DocCell><Kind>{r[2]}</Kind></DocCell>
                <DocCell>{r[3]}</DocCell>
                <MemoCell>{r[4]}</MemoCell>
                {digits(r[5]).map((d, j) => <DocCell key={`d${j}`}>{d.trim()}</DocCell>)}
                <td />
                {digits(r[6]).map((d, j) => <DocCell key={`c${j}`}>{d.trim()}</DocCell>)}
                <td />
                <Side>借</Side>
                <td /><td /><td />
              </Row>
            ))}
          </tbody>
        </Ledger>
      </Sheet>
      <VScroll $w={16}>
        <BarArrow $w={16} $h={14}><Tri d="up" /></BarArrow>
        <DitherFill $h={54} />
        <Thumb $h={90} />
        <DitherFill />
        <BarArrow $w={16} $h={11}><Tri /></BarArrow>
      </VScroll>
    </Content>
    <PagerRow>
      页:
      <TailGap $w={8} />
      <BarArrow $w={17} $h={11}><FirstLast c="#888" /></BarArrow>
      <TailGap $w={2} />
      <BarArrow $w={18} $h={11}><Tri d="left" /></BarArrow>
      <PageBox>1</PageBox>
      <BarArrow $w={18} $h={11}><Tri d="right" /></BarArrow>
      <TailGap $w={2} />
      <BarArrow $w={16} $h={11}><FirstLast end /></BarArrow>
      <TailGap $w={14} />
      <BarArrow $w={15} $h={11}><Tri d="left" /></BarArrow>
      <HThumb />
      <DitherFill />
      <BarArrow $w={15} $h={11}><Tri d="right" /></BarArrow>
      <TailGap $w={15} />
    </PagerRow>
    <StatusRow $h={13} $gap={2} $pad={2}>
      <StatusCell $w={452} $ch={10} $pl={2} $fs={8}>就绪</StatusCell>
      <TailGap $w={12} />
      <StatusCell $w={23} $ch={10} />
      <StatusCell $w={17} $ch={10} />
      <StatusCell $w={18} $ch={10} />
      <StatusCell $w={22} $ch={10} />
      <StatusCell $w={24} $ch={10} />
      <StatusCell $w={19} $ch={10} $center $fs={6.5}>NUM</StatusCell>
      <StatusCell $w={22} $ch={10} />
      <StatusCell $w={19} $ch={10} />
    </StatusRow>
    <TaskRow $h={16}>
      <TaskBtn $w={41} $ch={14} $gap={6} $fs={8}><Ic n="flag" s={12} />开始</TaskBtn>
      <Sep $m={1} />
      <TailGap $w={3} />
      {QUICK.map((q, i) => <Tool key={i} $w={19.5}><Ic n={q} s={13} /></Tool>)}
      <TailGap $w={13} />
      <Sep $m={4} />
      <TailGap $w={5} />
      <TaskBtn $w={45} $ch={14} $fs={8} $gap={4}><Ic n="pc" s={12} />我...</TaskBtn>
      <TaskBtn $w={48} $ch={14} $fs={7.5} $gap={3}><Ic n="drive" s={12} />X2 ...</TaskBtn>
      <TaskBtn $w={49} $ch={14} $fs={7.5}><Ic n="openf" s={12} />v01...</TaskBtn>
      <TaskBtn $w={49} $ch={14} $fs={7.5}><Ic n="openf" s={12} />v01...</TaskBtn>
      <TaskBtn $w={49} $ch={14} $fs={7.5} $on><Ic n="key" s={12} />v01...</TaskBtn>
      <TaskBtn $w={50} $ch={14} $fs={7.5} $gap={0}><Ic n="word" s={12} />Mic...</TaskBtn>
      <Tray $ml={11} $w={84} $ch={14}>
        <Ic n="tray" s={12} /><Ic n="speaker" s={11} /><EnBox $mr={9}>En</EnBox>21:52
      </Tray>
    </TaskRow>
  </Shot>
);

export default function App() {
  return (
    <Page>
      <Global />
      <Header>
        <HeadLeft>编号：<br />时间：2021 年 x 月 x 日</HeadLeft>
        <HeadMid>书山有路勤为径，学海无涯苦作舟</HeadMid>
        <HeadRight>页码：第 <Narrow>3</Narrow> 页  共 <Narrow>4</Narrow> 页</HeadRight>
      </Header>
      <ShotOne />
      <Body>
        <Line $i={16}>(PIC2)</Line>
        <Line $i={16} $s={.4}>二，输入。</Line>
        <JLine $i={21}><Q>凭证输入（上图 PIC2），按要求输入即可。注意，日期输入时，可以通过选择“日设</Q></JLine>
        <JLine><Q>定”或单击“日期”文本框；摘要输入时，可以通过“摘要选择”选定，也可在“摘要”</Q></JLine>
        <JLine><Q>文本框内直接输入；科码输入时，可直接输入，也可选择，另外可查询“科码检索”，输</Q></JLine>
        <Line $s={.4}>入科目 3 包含的文字查找科码。</Line>
        <Line $i={16} $s={.4}>科目维护，按提示输入明细科目的代码和名称。</Line>
        <Line $i={16} $s={.4}>三，输出。</Line>
      </Body>
      <ShotTwo />
      <PageNo>第 3 页 共 4 页</PageNo>
    </Page>
  );
}
